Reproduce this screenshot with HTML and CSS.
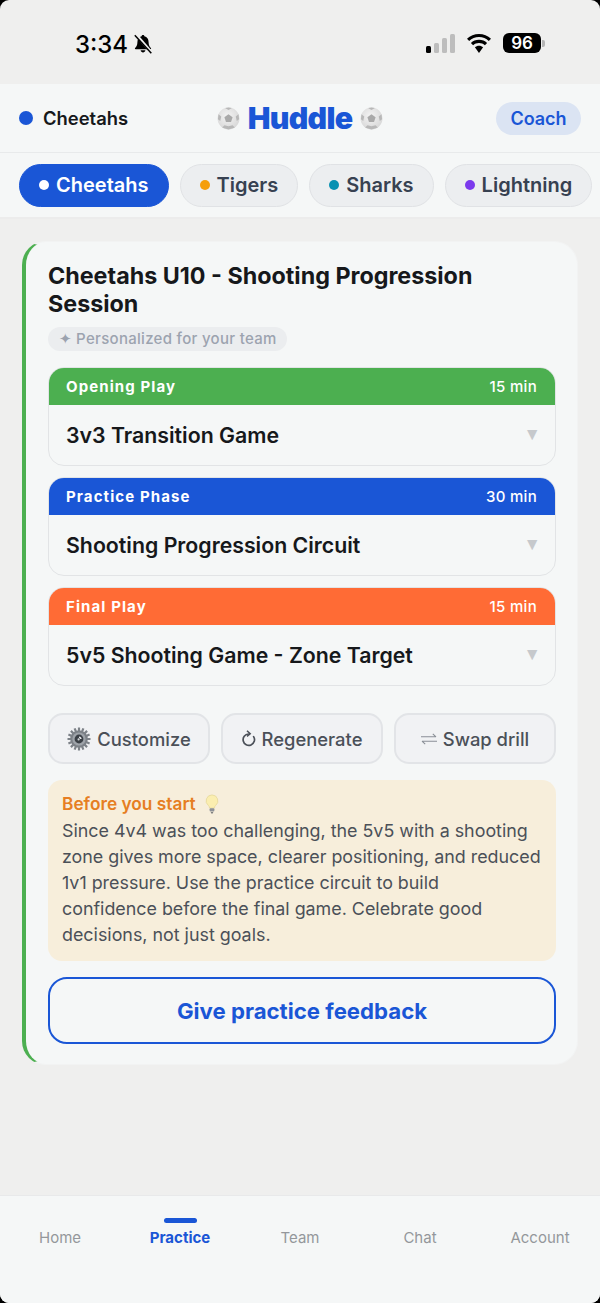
FILE: index.html
```html
<!DOCTYPE html>
<html lang="en">
<head>
<meta charset="utf-8">
<title>Huddle</title>
<link rel="stylesheet" href="styles.css">
</head>
<body>
<div class="app">
  <div class="status">
    <div class="status-left">
      <span class="clock">3:34</span>
      <svg class="bell" viewBox="0 0 20 20" width="20" height="20">
        <path d="M10 1c-.8 0-1.300.5-1.400 1.200C6 2.900 4.400 5.100 4.400 8.200c0 3-1 4.500-2.300 5.800-.5.500-.2 1.200.5 1.200h14.800c.7 0 1-.7.5-1.200-1.300-1.300-2.300-2.800-2.300-5.800 0-3.100-1.600-5.300-4.200-6C11.300 1.500 10.800 1 10 1z" fill="#000"/>
        <path d="M7.600 16.300h4.800c-.2 1.300-1.200 2.200-2.400 2.200s-2.200-.9-2.400-2.200z" fill="#000"/>
        <path d="M3 .5l15.500 18" stroke="#efefee" stroke-width="2.800"/>
        <path d="M1.800 1.200l16.500 18" stroke="#000" stroke-width="1.500"/>
      </svg>
    </div>
    <div class="status-right">
      <svg class="signal" viewBox="0 0 30 19" width="30" height="19">
        <rect x="0" y="12" width="5" height="7" rx="1.500" fill="#000"/>
        <rect x="8" y="9" width="5" height="10" rx="1.500" fill="#bdbdbd"/>
        <rect x="16" y="4" width="5" height="15" rx="1.500" fill="#bdbdbd"/>
        <rect x="24" y="0" width="5" height="19" rx="1.500" fill="#bdbdbd"/>
      </svg>
      <svg class="wifi" viewBox="0 0 26 19" width="26" height="19">
        <path d="M13 3.100c3.800 0 7.200 1.500 9.800 3.900l2.200-2.300C21.800 1.800 17.600 0 13 0S4.200 1.800 1 4.700L3.200 7c2.600-2.400 6-3.900 9.800-3.900z" fill="#000"/>
        <path d="M13 8.900c2.300 0 4.300.9 5.900 2.300l2.200-2.300C19 6.900 16.200 5.800 13 5.800s-6 1.100-8.100 3.100l2.200 2.300c1.600-1.400 3.600-2.300 5.900-2.300z" fill="#000"/>
        <path d="M13 11.700c-1.600 0-3 .6-4.100 1.600L13 19l4.100-5.700c-1.100-1-2.500-1.600-4.100-1.600z" fill="#000"/>
      </svg>
      <div class="battery"><span class="battery-level">96</span><span class="battery-cap"></span></div>
    </div>
  </div>

  <header class="topbar">
    <div class="team-now"><span class="dot dot-blue"></span>Cheetahs</div>
    <div class="brand">
      <svg class="ball" viewBox="0 0 20 20" width="23" height="23"><use href="#soccer"/></svg>
      <span class="brand-name">Huddle</span>
      <svg class="ball" viewBox="0 0 20 20" width="23" height="23"><use href="#soccer"/></svg>
    </div>
    <span class="role">Coach</span>
  </header>

  <nav class="teams">
    <a class="team team-active"><span class="pip pip-white"></span>Cheetahs</a>
    <a class="team"><span class="pip pip-orange"></span>Tigers</a>
    <a class="team"><span class="pip pip-teal"></span>Sharks</a>
    <a class="team"><span class="pip pip-purple"></span>Lightning</a>
  </nav>

  <main class="content">
    <section class="card">
      <h1 class="card-title">Cheetahs U10 - Shooting Progression Session</h1>
      <span class="badge">✦ Personalized for your team</span>

      <div class="drills">
        <article class="drill">
          <div class="drill-head head-green"><span class="phase">Opening Play</span><span class="mins">15 min</span></div>
          <div class="drill-body"><span>3v3 Transition Game</span><span class="caret">▼</span></div>
        </article>
        <article class="drill">
          <div class="drill-head head-blue"><span class="phase">Practice Phase</span><span class="mins">30 min</span></div>
          <div class="drill-body"><span>Shooting Progression Circuit</span><span class="caret">▼</span></div>
        </article>
        <article class="drill">
          <div class="drill-head head-orange"><span class="phase">Final Play</span><span class="mins">15 min</span></div>
          <div class="drill-body"><span>5v5 Shooting Game - Zone Target</span><span class="caret">▼</span></div>
        </article>
      </div>

      <div class="actions">
        <button class="action">
          <svg class="gear" viewBox="0 0 24 24" width="24" height="24">
            <g fill="#7d8288">
              <circle cx="12" cy="12" r="8.800"/>
              <g stroke="#7d8288" stroke-width="2.200">
                <path d="M12 .5v23M.5 12h23M3.900 3.900l16.200 16.200M20.100 3.900L3.900 20.100"/>
                <path d="M7.600 1.400l8.800 21.200M16.400 1.400L7.600 22.600M1.400 7.600l21.200 8.800M22.600 7.600L1.400 16.400"/>
              </g>
            </g>
            <circle cx="12" cy="12" r="6.600" fill="#9ea3a9"/>
            <circle cx="12" cy="12" r="4.400" fill="#3a3f45"/>
            <path d="M12 9.400a2.600 2.600 0 0 1 2.600 2.600h-1.500a1.100 1.100 0 0 0-1.100-1.100z" fill="#e6e8ea"/>
            <circle cx="11.600" cy="12.400" r="1.100" fill="#d0d3d6"/>
          </svg>
          Customize
        </button>
        <button class="action">
          <svg class="refresh" viewBox="0 0 14 17" width="14" height="17">
            <path d="M6.500 4A5.700 5.700 0 1 0 11.600 6.600" fill="none" stroke="#4b5058" stroke-width="1.700" stroke-linecap="round"/>
            <path d="M5 .8L8.200 3.800 5 6.400" fill="none" stroke="#4b5058" stroke-width="1.500"/>
          </svg>
          Regenerate
        </button>
        <button class="action">
          <svg class="swap" viewBox="0 0 16 12" width="16" height="12">
            <path d="M0 3.800h15M11.800 .8L15 3.800M16 8.200H1M4.200 11.200L1 8.200" fill="none" stroke="#8a8f96" stroke-width="1.100"/>
          </svg>
          Swap drill
        </button>
      </div>

      <aside class="tip">
        <div class="tip-title">Before you start
          <svg class="bulb" viewBox="0 0 16 22" width="16" height="20">
            <path d="M8 1a6.500 6.500 0 0 0-4 11.600c.9.800 1.200 1.600 1.300 2.900h5.400c.1-1.300.4-2.100 1.300-2.900A6.500 6.500 0 0 0 8 1z" fill="#fbeeb0" stroke="#e3d698" stroke-width=".8"/>
            <rect x="5.400" y="15.800" width="5.200" height="3.400" rx="1" fill="#8f9298"/>
            <path d="M6.500 20h3l-1 1.500h-1z" fill="#55585e"/>
          </svg>
        </div>
        <p class="tip-text">Since 4v4 was too challenging, the 5v5 with a shooting zone gives more space, clearer positioning, and reduced 1v1 pressure. Use the practice circuit to build<br>confidence before the final game. Celebrate good<br>decisions, not just goals.</p>
      </aside>

      <button class="feedback">Give practice feedback</button>
    </section>
  </main>

  <nav class="tabbar">
    <a class="tab">Home</a>
    <a class="tab tab-active">Practice</a>
    <a class="tab">Team</a>
    <a class="tab">Chat</a>
    <a class="tab">Account</a>
  </nav>
</div>

<svg class="defs" width="0" height="0">
  <defs>
    <radialGradient id="ballfill" cx="45%" cy="40%" r="65%">
      <stop offset="0" stop-color="#f4f4f4"/>
      <stop offset="1" stop-color="#d6d6d6"/>
    </radialGradient>
    <symbol id="soccer" viewBox="0 0 20 20">
      <circle cx="10" cy="10" r="9.500" fill="url(#ballfill)"/>
      <path d="M10 6.300l3.600 2.600-1.400 4.200H7.800L6.400 8.900z" fill="#a9a9a9"/>
      <path d="M7 .9l3 1.600 3-1.600L10 .5zM1.300 6.300L.8 10.600l2 1.600.9-3.900zM18.700 6.300l.5 4.300-2 1.600-.9-3.900zM4.500 17.800l2-1.900 3.500.9v2.700zM15.500 17.800l-2-1.900-3.500.9v2.700z" fill="#b8b8b8"/>
    </symbol>
  </defs>
</svg>
</body>
</html>
```

FILE: styles.css
```css
* {
  box-sizing: border-box;
}

html,
body {
  margin: 0;
  height: 100%;
  background: #000;
}

body {
  font-family: Inter, "Liberation Sans", sans-serif;
  color: #16181b;
}

.app {
  height: 1303px;
  display: flex;
  flex-direction: column;
  background: #efefee;
  border-radius: 9px;
  overflow: hidden;
}

.defs {
  position: absolute;
}

/* Device status row */
.status {
  height: 84px;
  flex: none;
  display: flex;
  justify-content: space-between;
  padding: 30px 55px 0 75px;
  color: #000;
}

.status-left {
  display: flex;
  align-items: flex-start;
  gap: 5px;
}

.clock {
  font-size: 24px;
  line-height: 29px;
  font-weight: 500;
}

.bell {
  margin-top: 4px;
}

.status-right {
  display: flex;
  align-items: flex-start;
  gap: 10px;
  padding-top: 3px;
}

.signal,
.wifi {
  margin-top: 1px;
}

.wifi {
  margin-right: 1px;
}

.battery {
  display: flex;
  align-items: center;
  gap: 1px;
}

.battery-level {
  width: 38px;
  height: 20px;
  background: #000;
  color: #fff;
  border-radius: 6px;
  font-size: 17px;
  font-weight: 600;
  line-height: 20px;
  text-align: center;
}

.battery-cap {
  width: 3px;
  height: 7px;
  border-radius: 0 2px 2px 0;
  background: #b5b5b5;
}

/* App header */
.topbar {
  height: 69px;
  flex: none;
  display: grid;
  grid-template-columns: 1fr auto 1fr;
  align-items: center;
  padding: 0 19px;
  background: #f5f7f7;
  border-bottom: 1px solid #e8eaeb;
}

.team-now {
  display: flex;
  align-items: center;
  gap: 10px;
  font-size: 18.400px;
  font-weight: 600;
}

.dot {
  width: 14px;
  height: 14px;
  border-radius: 50%;
}

.dot-blue {
  background: #1a56d6;
}

.brand {
  display: flex;
  align-items: center;
  gap: 8px;
}

.brand-name {
  font-size: 30.300px;
  font-weight: 900;
  letter-spacing: -.7px;
  color: #1a56d6;
  line-height: 34px;
}

.ball {
  display: block;
}

.role {
  justify-self: end;
  width: 85px;
  height: 33px;
  border-radius: 17px;
  background: #dbe4f3;
  color: #1a56d6;
  font-size: 18px;
  font-weight: 600;
  line-height: 33px;
  text-align: center;
}

/* Team switcher */
.teams {
  height: 66px;
  flex: none;
  display: flex;
  align-items: center;
  gap: 11px;
  padding: 0 0 0 19px;
  background: #f5f7f7;
  border-bottom: 2px solid #ececec;
  overflow: hidden;
}

.team {
  height: 43px;
  flex: none;
  display: flex;
  align-items: center;
  gap: 7px;
  padding: 0 19px;
  border-radius: 22px;
  background: #eceef0;
  border: 1px solid #e0e2e5;
  color: #374151;
  font-size: 20px;
  font-weight: 600;
}

.team-active {
  background: #1a56d6;
  border-color: #1a56d6;
  color: #fff;
}

.pip {
  width: 10px;
  height: 10px;
  border-radius: 50%;
}

.pip-white {
  background: #fff;
}

.pip-orange {
  background: #f59e0b;
}

.pip-teal {
  background: #0891b2;
}

.pip-purple {
  background: #7c3aed;
}

/* Session card */
.content {
  flex: 1;
  padding: 22px 22px 0;
}

.card {
  padding: 20px 21px 20px 22px;
  background: #f5f7f7;
  border: 1px solid #f2f3f3;
  border-left: 4px solid #4caf50;
  border-radius: 24px;
}

.card-title {
  max-width: 480px;
  margin: 0 0 9px;
  font-size: 23.300px;
  line-height: 28px;
  font-weight: 700;
  color: #16181b;
}

.badge {
  display: block;
  width: fit-content;
  height: 24px;
  padding: 0 10.500px;
  border-radius: 12px;
  background: #ebedef;
  color: #9ca3af;
  font-size: 15px;
  font-weight: 500;
  letter-spacing: .3px;
  line-height: 24px;
}

.drills {
  margin-top: 16px;
  display: flex;
  flex-direction: column;
  gap: 11px;
}

.drill {
  height: 99px;
  border: 1px solid #e2e4e6;
  border-radius: 16px;
  overflow: hidden;
}

.drill-head {
  height: 38px;
  margin: -1px -1px 0;
  display: flex;
  align-items: center;
  justify-content: space-between;
  padding: 0 19px 0 18px;
  color: #fff;
}

.head-green {
  background: #4caf50;
}

.head-blue {
  background: #1a56d6;
}

.head-orange {
  background: #ff6b35;
}

.phase {
  font-size: 15px;
  font-weight: 700;
  letter-spacing: 1.100px;
}

.mins {
  font-size: 15px;
  font-weight: 500;
  letter-spacing: .3px;
}

.drill-body {
  height: 60px;
  display: flex;
  align-items: center;
  justify-content: space-between;
  padding: 0 17px;
  font-size: 21.300px;
  font-weight: 600;
}

.caret {
  font-size: 11px;
  color: #c6c9cc;
  transform: scaleY(1.200);
}

.actions {
  margin-top: 27px;
  display: grid;
  grid-template-columns: repeat(3, 1fr);
  gap: 11px;
}

.action {
  height: 51px;
  display: flex;
  align-items: center;
  justify-content: center;
  gap: 6px;
  padding: 0;
  border: 2px solid #e2e4e7;
  border-radius: 15px;
  background: #f1f2f4;
  color: #4b5058;
  font-family: inherit;
  font-size: 18.400px;
  font-weight: 500;
}

.gear,
.refresh,
.swap {
  display: block;
  flex: none;
}

.tip {
  margin-top: 16px;
  height: 181px;
  padding: 12px 14px 0;
  background: #f7eedb;
  border-radius: 14px;
}

.tip-title {
  display: flex;
  align-items: center;
  gap: 8px;
  color: #e67e22;
  font-size: 17.300px;
  font-weight: 600;
  line-height: 24px;
}

.bulb {
  display: block;
}

.tip-text {
  margin: 2px 0 0;
  color: #4b5058;
  font-size: 17.870px;
  line-height: 26px;
}

.feedback {
  display: block;
  width: 100%;
  height: 67px;
  margin-top: 16px;
  border: 2px solid #1a56d6;
  border-radius: 19px;
  background: transparent;
  color: #1a56d6;
  font-family: inherit;
  font-size: 22.200px;
  font-weight: 700;
}

/* Bottom navigation */
.tabbar {
  height: 108px;
  flex: none;
  display: grid;
  grid-template-columns: repeat(5, 1fr);
  background: #f5f7f7;
  border-top: 1px solid #e8e9ea;
}

.tab {
  position: relative;
  padding-top: 33px;
  text-align: center;
  color: #94979b;
  font-size: 15px;
  font-weight: 400;
  line-height: 18px;
}

.tab-active {
  color: #1a56d6;
  font-weight: 700;
}

.tab-active::before {
  content: "";
  position: absolute;
  top: 22px;
  left: 50%;
  width: 33px;
  height: 5px;
  margin-left: -16.500px;
  border-radius: 3px;
  background: #1a56d6;
}
```
